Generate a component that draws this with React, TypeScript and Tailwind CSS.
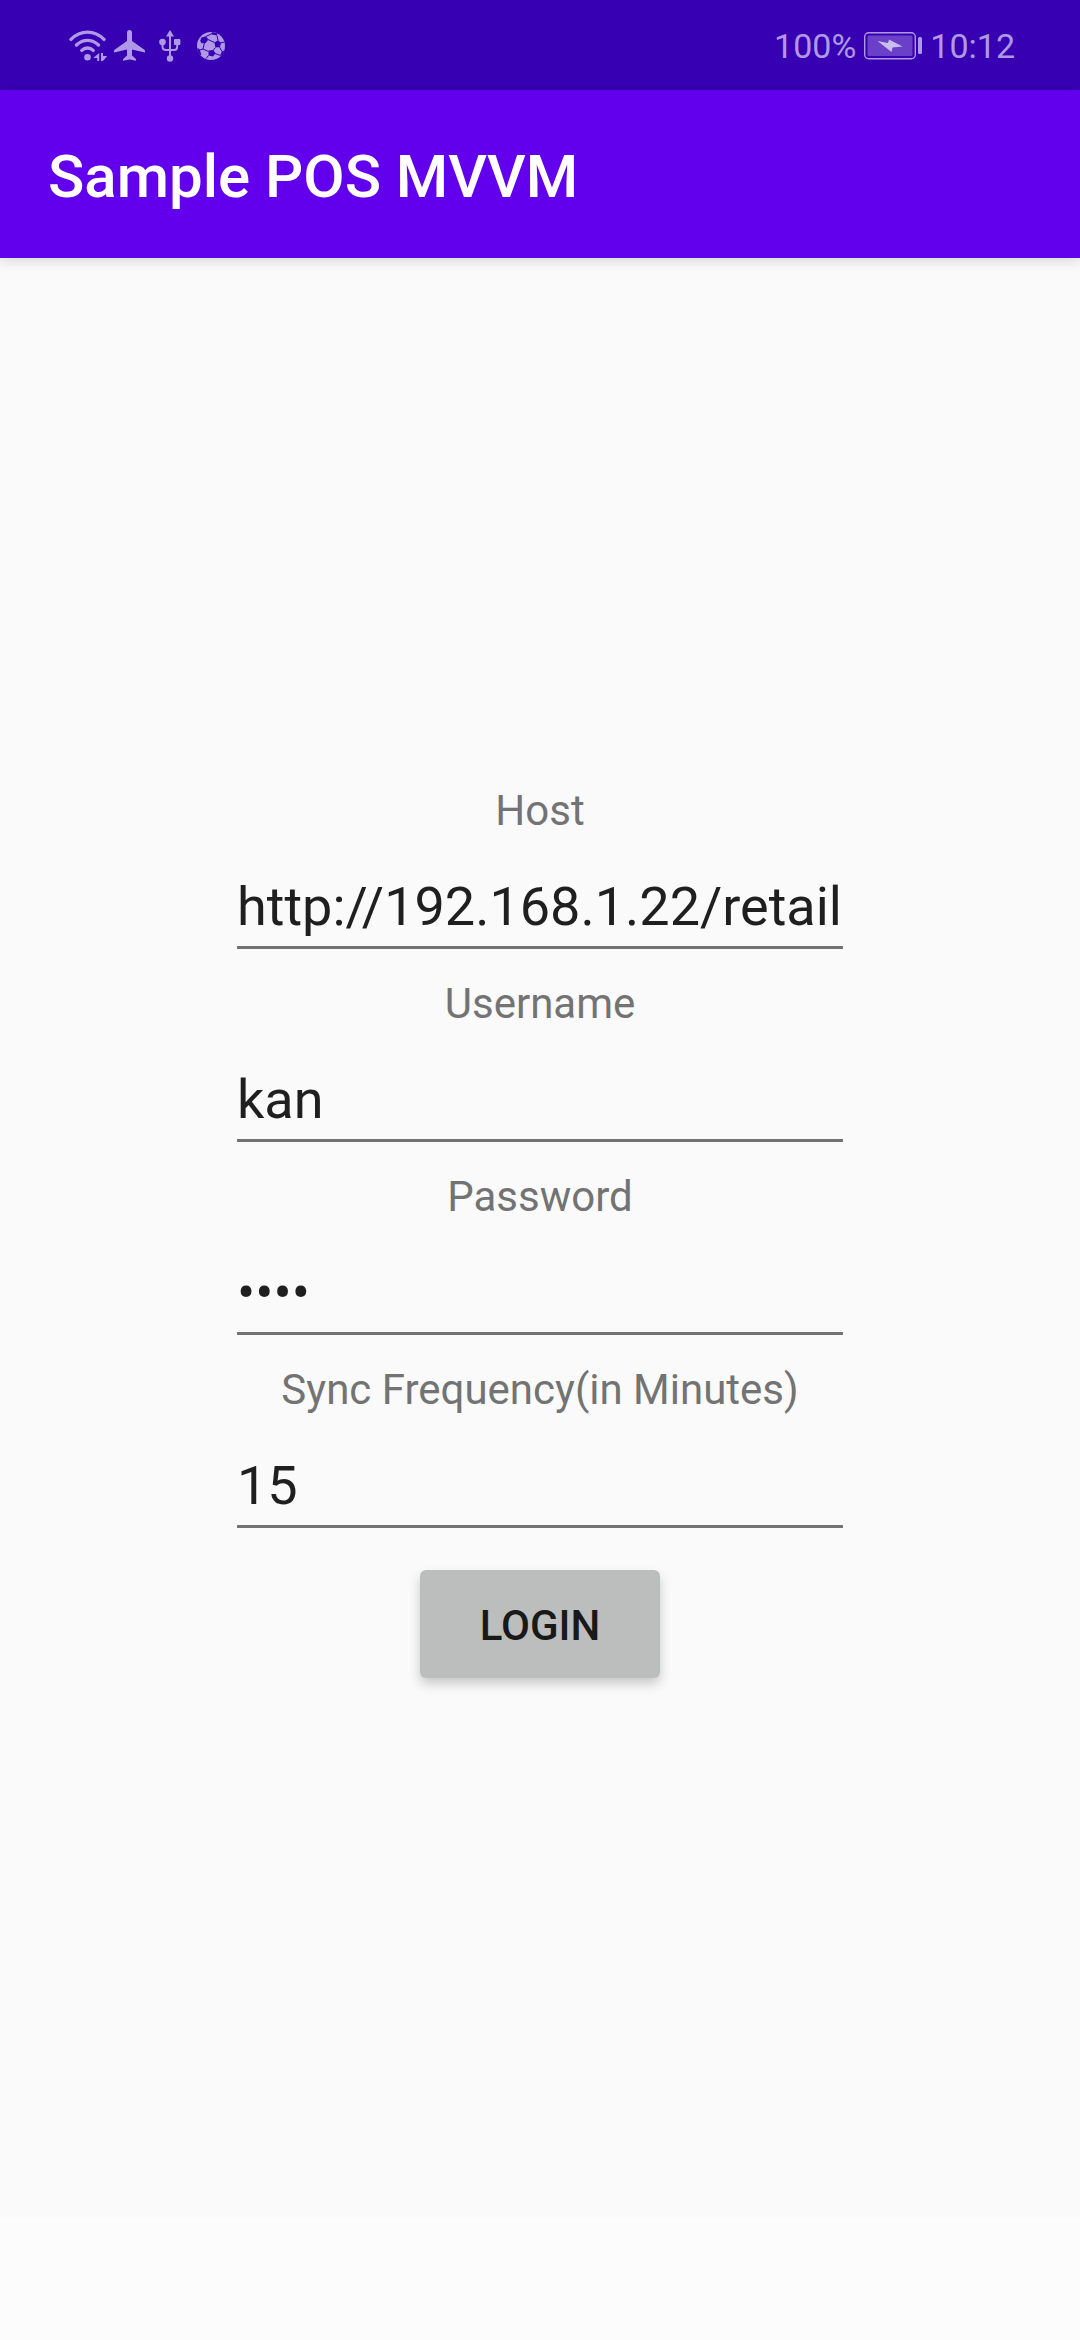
import React, { useState } from "react";

function WifiIcon() {
  return (
    <svg className="h-[32px] w-[40px]" viewBox="0 0 40 32" fill="none" stroke="currentColor" strokeWidth="3.4" strokeLinecap="round" aria-label="Wi-Fi">
      <path d="M2 9.400C11.500 -.3 25.500 -.3 35 9.400" />
      <path d="M7.500 15c6.500-6.200 15.500-6.200 22 0" />
      <path d="M12.800 20.400c3.300-3.200 8.100-3.200 11.400 0" />
      <circle cx="18.500" cy="27.300" r="3.300" fill="currentColor" stroke="none" />
      <path d="M30.200 23v8h-2v-3h-4zM32 23h2v3h4.200L34 31h-2z" fill="currentColor" stroke="none" />
    </svg>
  );
}

function PlaneIcon() {
  return (
    <svg className="h-[32px] w-[32px]" viewBox="0 0 32 32" fill="currentColor" aria-label="Airplane mode">
      <path d="M15.500 0c-1.600 0-2.500 1.300-2.500 3v8L.9 19.400c-.6.500-.9 1-.9 1.700v1.500L13 19.500v6l-3.400 3c-.4.400-.6.800-.6 1.300v1l6.500-1.300 6.500 1.300v-1c0-.5-.2-.9-.6-1.300l-3.400-3v-6l13 3.100v-1.500c0-.7-.3-1.200-.9-1.700L18 11V3c0-1.700-.9-3-2.500-3z" />
    </svg>
  );
}

function UsbIcon() {
  return (
    <svg className="h-[32px] w-[22px]" viewBox="0 0 22 32" fill="currentColor" aria-label="USB">
      <path d="M11 0l4 6.500H7z" />
      <circle cx="11" cy="28.500" r="3.200" />
      <circle cx="3.500" cy="12" r="3.300" />
      <rect x="15" y="9" width="6.400" height="6" rx="1" />
      <path d="M11 5v22M3.500 13v3.500q0 3.500 3.500 3.500h8q3.200 0 3.200-3.500V13" fill="none" stroke="currentColor" strokeWidth="2" />
    </svg>
  );
}

function BallIcon() {
  return (
    <svg className="h-[28px] w-[28px]" viewBox="0 0 28 28" aria-label="Football">
      <circle cx="14" cy="14" r="14" fill="currentColor" />
      <g fill="#3700b3">
        <path d="M4.500 5.500l4.500-1.300 2.300 3.300-2.500 3.500-4.300.3-1.300-2.500z" />
        <path d="M17.300 10.500l3.700-2.300 3 2.500-1 4.300-4.500.5z" />
        <path d="M11.500 18.500l4.700-.5 2.300 3.300-2.500 3.200-4.500-1z" />
        <path d="M.2 16l2.300 1 1.800 5.500-1 .5C1.500 21 .5 18.500.2 16z" />
        <path d="M15 .1l5.500 1.500-.5 1.900-5.300-1zM27.200 18.500l-2.200.8-1.800 4 .8.800c1.500-1.500 2.600-3.500 3.200-5.600z" />
      </g>
      <path d="M11 7.500l6.500 3M9 10.500l-1.500 0L6 17l-3.500 1M6 17l5.500 2.500M18.500 15.500L16 18.500M9 4.500l6-3M21 8.500l-1-5M23.500 11l4-1M22.500 15l2.500 4.500M18 21.500l5.500 2M11.500 23.500L9 26.500" fill="none" stroke="#3700b3" strokeWidth="1" />
    </svg>
  );
}

function BatteryIcon() {
  return (
    <svg className="h-[28px] w-[58px]" viewBox="0 0 58 28" aria-label="Battery charging">
      <rect x="0.700" y="0.700" width="50.600" height="26" rx="4" fill="none" stroke="currentColor" strokeWidth="1.400" />
      <rect x="3.500" y="3.500" width="45" height="20.500" rx="1.500" fill="#6a40c8" />
      <path d="M13.500 9l10.500 2 1-3.500L38.500 14.500l-10 1-1 4.500z" fill="#cbbdf0" />
      <rect x="54" y="5" width="4" height="17" rx="1.500" fill="currentColor" />
    </svg>
  );
}

const initialFields = [
  { id: "host", label: "Host", type: "text", value: "http://192.168.1.22/retail" },
  { id: "username", label: "Username", type: "text", value: "kan" },
  { id: "password", label: "Password", type: "password", value: "1234" },
  { id: "sync", label: "Sync Frequency(in Minutes)", type: "text", value: "15" },
];

function Field({ id, label, type, value }: { id: string; label: string; type: string; value: string }) {
  const [text, setText] = useState(value);
  return (
    <div className="mb-[27px] flex w-full flex-col">
      <label htmlFor={id} className="text-center text-[42px] leading-[56px] text-[#737373]">
        {label}
      </label>
      <input
        id={id}
        type={type}
        value={text}
        onChange={(e) => setText(e.target.value)}
        className="h-[110px] w-full border-b-[3px] border-[#737373] bg-transparent pt-9 pb-[7px] text-[54px] leading-[64px] text-[#1f1f1f] outline-none"
      />
    </div>
  );
}

export default function App() {
  return (
    <div className="flex min-h-screen flex-col bg-[#fafafa] font-['Roboto',sans-serif]">
      <div className="flex h-[90px] items-center justify-between bg-[#3700b3] pt-0.5 pr-[65px] pl-[69px] text-[#af99e6]">
        <div className="flex items-center">
          <WifiIcon />
          <div className="ml-[5px] flex items-center">
            <PlaneIcon />
          </div>
          <div className="ml-[13px] flex items-center gap-4">
            <UsbIcon />
            <BallIcon />
          </div>
        </div>
        <div className="flex items-center text-[34px] leading-[40px]">
          <span>100%</span>
          <div className="mx-2">
            <BatteryIcon />
          </div>
          <span>10:12</span>
        </div>
      </div>
      <header className="z-10 flex h-[168px] items-center bg-[#6200ee] px-12 pt-1.5 shadow-[0_3px_12px_rgba(0,0,0,0.15)]">
        <h1 className="text-[60px] leading-[70px] font-medium text-white">Sample POS MVVM</h1>
      </header>
      <main className="flex flex-1 flex-col items-center justify-center pb-4">
        <form className="flex w-[606px] max-w-full flex-col items-center" onSubmit={(e) => e.preventDefault()}>
          {initialFields.map((f) => (
            <Field key={f.id} {...f} />
          ))}
          <button
            type="submit"
            className="mt-[15px] h-[108px] w-60 rounded-md bg-[#bcbebd] pt-1 text-[42px] leading-[56px] font-medium text-[#191919] shadow-[0_6px_12px_rgba(0,0,0,0.2)]"
          >
            LOGIN
          </button>
        </form>
      </main>
      <div className="h-[122px] bg-[#fcfcfc]" />
    </div>
  );
}
